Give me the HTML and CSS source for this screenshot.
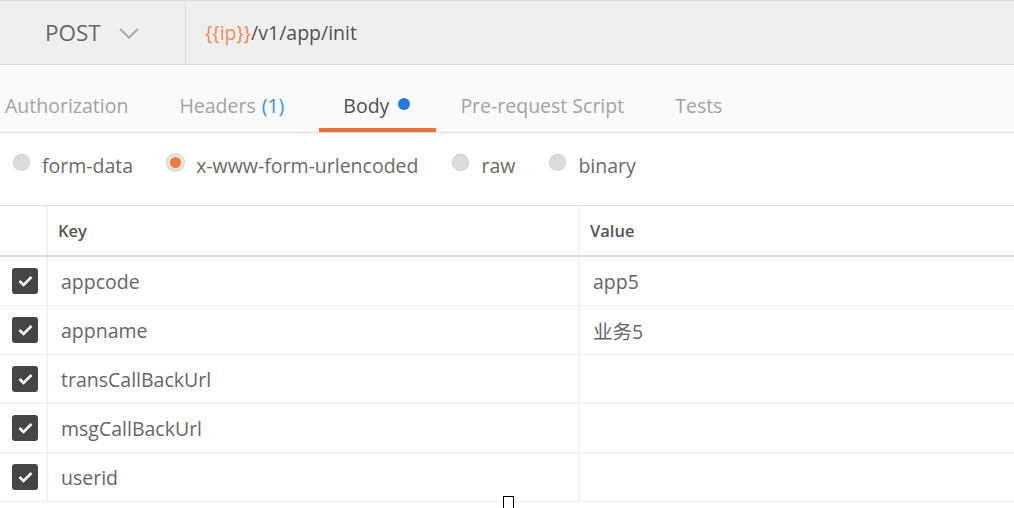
FILE: index.html
```html
<!DOCTYPE html>
<html>
<head>
<meta charset="utf-8">
<link rel="stylesheet" href="styles.css">
</head>
<body>
<div class="topbar">
  <div class="method">
    <span class="method-name">POST</span>
    <svg class="chevron" width="20" height="11" viewBox="0 0 20 11"><path d="M1 1 L10 9.5 L19 1" fill="none" stroke="#a9a9a9" stroke-width="2"/></svg>
  </div>
  <div class="url"><span class="var">{{ip}}</span>/v1/app/init</div>
</div>
<div class="tabs">
  <div class="tab">Authorization</div>
  <div class="tab tab-headers">Headers <span class="count">(1)</span></div>
  <div class="tab active">Body <span class="dot"></span></div>
  <div class="tab">Pre-request Script</div>
  <div class="tab">Tests</div>
</div>
<div class="bodytypes">
  <label class="opt"><span class="radio"></span>form-data</label>
  <label class="opt"><span class="radio on"></span>x-www-form-urlencoded</label>
  <label class="opt"><span class="radio"></span>raw</label>
  <label class="opt"><span class="radio"></span>binary</label>
</div>
<div class="kv">
  <div class="row head">
    <div class="c0"></div>
    <div class="c1">Key</div>
    <div class="c2">Value</div>
  </div>
  <div class="row">
    <div class="c0"><span class="check"><svg width="15" height="12" viewBox="0 0 15 12"><path d="M1.5 6 L5.5 10 L13.5 2" fill="none" stroke="#fff" stroke-width="2.6"/></svg></span></div>
    <div class="c1">appcode</div>
    <div class="c2">app5</div>
  </div>
  <div class="row">
    <div class="c0"><span class="check"><svg width="15" height="12" viewBox="0 0 15 12"><path d="M1.5 6 L5.5 10 L13.5 2" fill="none" stroke="#fff" stroke-width="2.6"/></svg></span></div>
    <div class="c1">appname</div>
    <div class="c2">业务5</div>
  </div>
  <div class="row">
    <div class="c0"><span class="check"><svg width="15" height="12" viewBox="0 0 15 12"><path d="M1.5 6 L5.5 10 L13.5 2" fill="none" stroke="#fff" stroke-width="2.6"/></svg></span></div>
    <div class="c1">transCallBackUrl</div>
    <div class="c2"></div>
  </div>
  <div class="row">
    <div class="c0"><span class="check"><svg width="15" height="12" viewBox="0 0 15 12"><path d="M1.5 6 L5.5 10 L13.5 2" fill="none" stroke="#fff" stroke-width="2.6"/></svg></span></div>
    <div class="c1">msgCallBackUrl</div>
    <div class="c2"></div>
  </div>
  <div class="row">
    <div class="c0"><span class="check"><svg width="15" height="12" viewBox="0 0 15 12"><path d="M1.5 6 L5.5 10 L13.5 2" fill="none" stroke="#fff" stroke-width="2.6"/></svg></span></div>
    <div class="c1">userid</div>
    <div class="c2"></div>
  </div>
</div>
<div class="cursor"></div>
</body>
</html>
```
FILE: styles.css
```css
html, body {
  margin: 0;
  padding: 0;
  background: #fff;
}
body {
  font-family: "Open Sans", "Noto Sans CJK SC", sans-serif;
  color: #555;
  width: 1014px;
  height: 508px;
  overflow: hidden;
  position: relative;
}
.topbar {
  display: flex;
  height: 63px;
  background: #efefef;
  border-top: 1px solid #dcdcdc;
  border-bottom: 1px solid #d6d6d6;
}
.method {
  width: 140px;
  padding-left: 45px;
  display: flex;
  align-items: center;
  border-right: 1px solid #dedede;
}
.method-name {
  font-size: 22.5px;
  color: #666;
}
.chevron {
  margin-left: 18px;
  margin-top: 1px;
}
.url {
  display: flex;
  align-items: center;
  padding-left: 19px;
  font-size: 19.5px;
  color: #505050;
}
.var {
  color: #ef8a55;
}
.tabs {
  display: flex;
  height: 67px;
  background: #fafafa;
  border-bottom: 1px solid #dcdcdc;
  margin-left: -19px;
}
.tab {
  display: flex;
  align-items: center;
  padding: 17px 24px 0;
  font-size: 19.5px;
  color: #a3a3a3;
  border-bottom: 4px solid transparent;
  box-sizing: border-box;
  height: 67px;
  margin-right: 3px;
}
.tab-headers {
  padding-right: 32px;
}
.tab.active {
  color: #505050;
  border-bottom-color: #e5733d;
  padding-right: 26px;
  margin-right: 0;
}
.count {
  color: #3b8ee8;
  margin-left: 6px;
}
.dot {
  width: 12px;
  height: 12px;
  border-radius: 50%;
  background: #2478e6;
  margin-left: 9px;
  margin-top: -2px;
}
.bodytypes {
  display: flex;
  align-items: center;
  height: 64px;
  padding-bottom: 8px;
  padding-left: 13px;
  border-bottom: 1px solid #e2e2e2;
}
.opt {
  display: flex;
  align-items: center;
  font-size: 19.5px;
  color: #6a6a6a;
  margin-right: 34px;
}
.radio {
  width: 17px;
  height: 17px;
  border-radius: 50%;
  background: #dcdcdc;
  box-shadow: inset 0 0 0 1px #d2d2d2;
  margin-right: 12px;
  margin-top: -6px;
  box-sizing: border-box;
}
.radio.on {
  background: #ee7b3e;
  border: 3px solid #e4e4e4;
  box-shadow: 0 0 0 1px #d4d4d4;
}
.kv {
  display: flex;
  flex-direction: column;
}
.row {
  display: grid;
  grid-template-columns: 48px 532px 1fr;
  height: 48px;
  border-bottom: 1px solid #efefef;
}
.row.head {
  height: 49px;
  border-bottom: 2px solid #dedede;
}
.row > div {
  display: flex;
  align-items: center;
}
.c0 {
  border-right: 2px solid #f2f2f2;
  padding-left: 12px;
}
.c1 {
  border-right: 2px solid #f2f2f2;
  padding-left: 13px;
  font-size: 19.5px;
  color: #666;
}
.c2 {
  padding-left: 13px;
  font-size: 19.5px;
  color: #666;
}
.row.head .c1,
.row.head .c2 {
  padding-left: 10px;
  font-size: 16.5px;
  font-weight: 600;
  color: #555;
}
.check {
  width: 26px;
  height: 26px;
  border-radius: 3px;
  background: #454545;
  display: flex;
  align-items: center;
  justify-content: center;
}
.cursor {
  position: absolute;
  left: 503px;
  top: 496px;
  width: 9px;
  height: 12px;
  border: 1px solid #000;
  border-bottom: none;
  background: #fff;
}
```
